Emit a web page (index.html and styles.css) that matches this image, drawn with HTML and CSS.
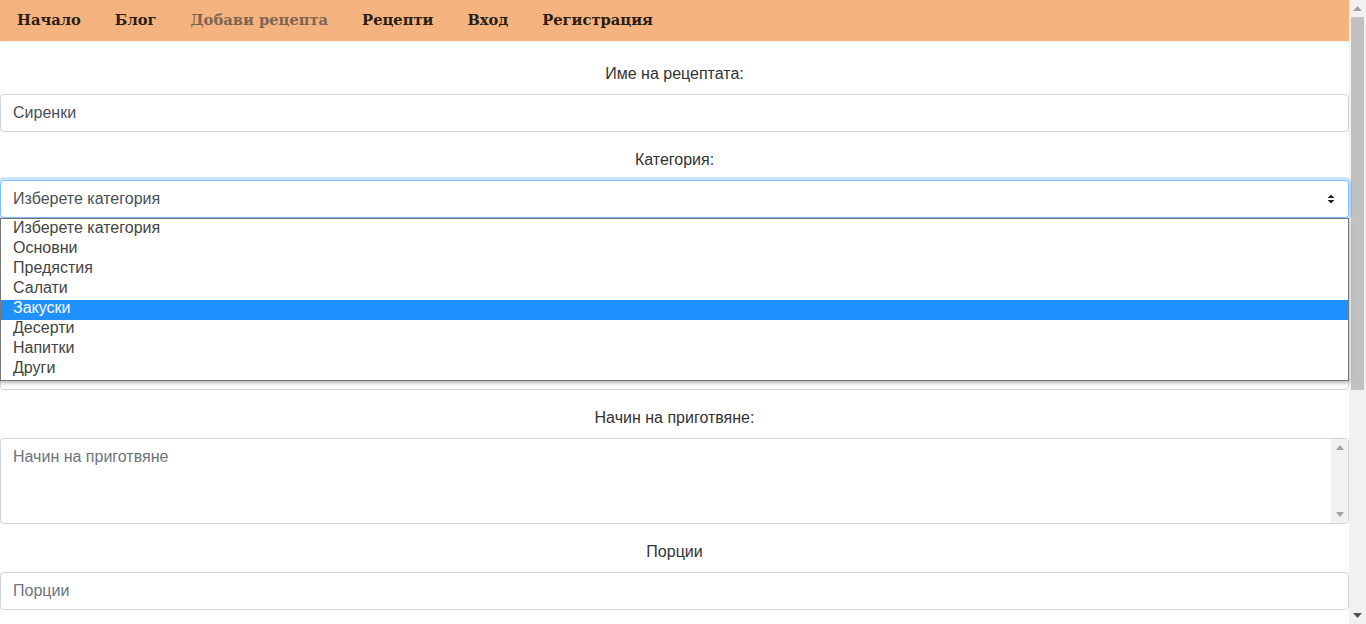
FILE: index.html
```html
<!DOCTYPE html>
<html lang="bg">
<head>
<meta charset="utf-8">
<title>Добави рецепта</title>
<link rel="stylesheet" href="styles.css">
</head>
<body>
<div class="page">
  <main class="content">
    <nav class="navbar">
      <a class="nav-link" href="#">Начало</a>
      <a class="nav-link" href="#">Блог</a>
      <a class="nav-link active" href="#">Добави рецепта</a>
      <a class="nav-link" href="#">Рецепти</a>
      <a class="nav-link" href="#">Вход</a>
      <a class="nav-link" href="#">Регистрация</a>
    </nav>
    <form class="recipe-form">
      <div class="form-group">
        <label class="form-label">Име на рецептата:</label>
        <input class="form-control" type="text" value="Сиренки">
      </div>
      <div class="form-group select-group">
        <label class="form-label">Категория:</label>
        <div class="select-box">
          <span>Изберете категория</span>
          <svg class="select-arrows" width="8" height="12" viewBox="0 0 8 12"><path d="M4 1.5 L7.5 5 H0.5 Z M4 10.5 L0.5 7 H7.5 Z" fill="#222"/></svg>
        </div>
        <ul class="dropdown">
          <li>Изберете категория</li>
          <li>Основни</li>
          <li>Предястия</li>
          <li>Салати</li>
          <li class="selected">Закуски</li>
          <li>Десерти</li>
          <li>Напитки</li>
          <li>Други</li>
        </ul>
      </div>
      <div class="form-group">
        <label class="form-label">Продукти:</label>
        <input class="form-control" type="text" placeholder="Продукти">
      </div>
      <div class="form-group">
        <label class="form-label">Време за приготвяне:</label>
        <input class="form-control" type="text" placeholder="Време">
      </div>
      <div class="form-group">
        <label class="form-label">Начин на приготвяне:</label>
        <div class="textarea-wrap">
          <textarea class="form-control textarea" rows="3" placeholder="Начин на приготвяне"></textarea>
          <div class="mini-scroll">
            <svg width="8" height="5" viewBox="0 0 8 5"><path d="M4 0 L8 5 H0 Z" fill="#a3a3a3"/></svg>
            <svg width="8" height="5" viewBox="0 0 8 5"><path d="M0 0 H8 L4 5 Z" fill="#a3a3a3"/></svg>
          </div>
        </div>
      </div>
      <div class="form-group">
        <label class="form-label">Порции</label>
        <input class="form-control" type="text" placeholder="Порции">
      </div>
    </form>
  </main>
  <div class="page-scroll">
    <svg class="arrow" width="9" height="5" viewBox="0 0 9 5"><path d="M4.5 0 L9 5 H0 Z" fill="#a3a3a3"/></svg>
    <div class="thumb"></div>
    <div class="track"></div>
    <svg class="arrow" width="9" height="5" viewBox="0 0 9 5"><path d="M0 0 H9 L4.5 5 Z" fill="#505050"/></svg>
  </div>
</div>
</body>
</html>
```
FILE: styles.css
```css
html, body {
  margin: 0;
  height: 624px;
  overflow: hidden;
}
body {
  font-family: "Liberation Sans", Arial, sans-serif;
  font-size: 16px;
  line-height: 1.5;
  color: #333;
  background: #fff;
}
.page {
  display: flex;
  height: 624px;
}
.content {
  flex: 1;
  min-width: 0;
}
.navbar {
  display: flex;
  align-items: center;
  height: 41px;
  background: #f5b47f;
  box-shadow: 0 1px 2px rgba(0,0,0,0.08);
}
.nav-link {
  padding: 0 17px;
  font-family: "DejaVu Serif", "Liberation Serif", serif;
  font-weight: bold;
  font-size: 14.7px;
  color: #2a1d14;
  text-decoration: none;
}
.nav-link.active {
  color: #7e6552;
}
.recipe-form {
  display: flex;
  flex-direction: column;
  padding-top: 21px;
}
.form-group {
  display: flex;
  flex-direction: column;
  margin-bottom: 16px;
}
.form-label {
  text-align: center;
  margin-bottom: 8px;
  line-height: 24px;
  color: #333;
}
.form-control {
  box-sizing: border-box;
  display: block;
  height: 38px;
  width: 100%;
  margin: 0;
  padding: 6px 12px;
  font-family: "Liberation Sans", Arial, sans-serif;
  font-size: 16px;
  line-height: 24px;
  color: #495057;
  border: 1px solid #ced4da;
  border-radius: 4px;
  background: #fff;
}
.form-control::placeholder {
  color: #6c757d;
}
.textarea-wrap {
  position: relative;
}
.textarea {
  height: 86px;
  resize: none;
  overflow: hidden;
}
.mini-scroll {
  position: absolute;
  top: 1px;
  right: 1px;
  bottom: 1px;
  width: 17px;
  background: #f1f1f1;
  display: flex;
  flex-direction: column;
  justify-content: space-between;
  align-items: center;
  padding: 6px 0;
  box-sizing: border-box;
}
.select-group {
  position: relative;
}
.select-box {
  box-sizing: border-box;
  display: flex;
  align-items: center;
  justify-content: space-between;
  height: 38px;
  padding: 6px 13px 6px 12px;
  color: #495057;
  border: 1px solid #80bdff;
  border-radius: 4px;
  box-shadow: 0 0 0 3px rgba(0,123,255,0.2);
  background: #fff;
}
.dropdown {
  position: absolute;
  left: 0;
  right: 0;
  top: 100%;
  margin: 0;
  padding: 0;
  list-style: none;
  border: 1px solid #767676;
  background: #fff;
  box-shadow: 0 2px 4px rgba(0,0,0,0.3);
  z-index: 5;
}
.dropdown li {
  height: 20px;
  line-height: 16px;
  padding-left: 12px;
  color: #444;
}
.dropdown li:first-child {
  margin-top: 1px;
}
.dropdown li.selected {
  background: #1e90ff;
  color: #fff;
}
.page-scroll {
  width: 17px;
  flex: none;
  background: #f1f1f1;
  display: flex;
  flex-direction: column;
  align-items: center;
}
.page-scroll .arrow {
  flex: none;
  margin: 6px 0;
}
.thumb {
  width: 13px;
  height: 373px;
  background: #c1c1c1;
  flex: none;
}
.track {
  flex: 1;
}
```
